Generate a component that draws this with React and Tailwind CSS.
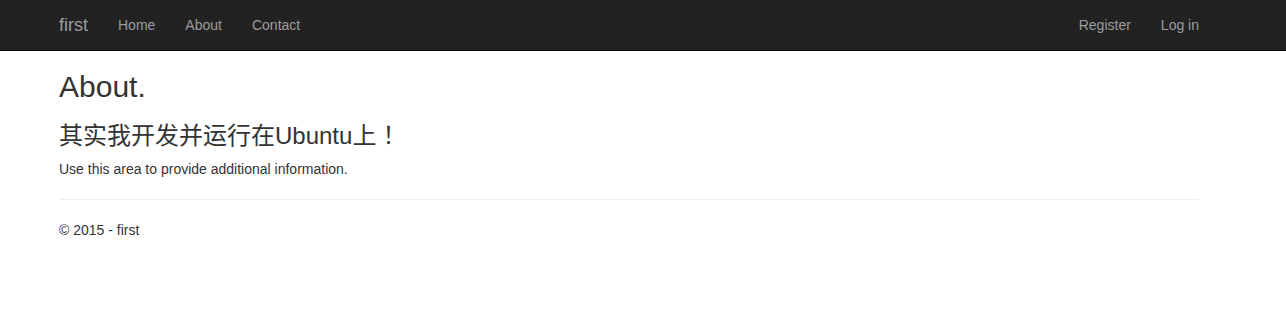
import React from 'react';

const font = { fontFamily: '"Liberation Sans", "Noto Sans CJK SC", Arial, sans-serif' };

const NavLink = ({ children }) => (
  <a href="#" className="block px-[15px] py-[15px] text-[14px] leading-[20px] text-[#9d9d9d]">
    {children}
  </a>
);

export default function App() {
  return (
    <div className="min-h-[327px] bg-white text-[#333] text-[14px] leading-[20px]" style={font}>
      {/* Navbar */}
      <div className="h-[51px] bg-[#222] border-b border-[#080808]">
        <div className="ml-[59px] w-[1140px] flex items-center justify-between">
          <div className="flex items-center">
            <a href="#" className="block -ml-[15px] px-[15px] py-[15px] text-[18px] leading-[20px] text-[#9d9d9d]">
              first
            </a>
            <NavLink>Home</NavLink>
            <NavLink>About</NavLink>
            <NavLink>Contact</NavLink>
          </div>
          <div className="flex items-center -mr-[15px]">
            <NavLink>Register</NavLink>
            <NavLink>Log in</NavLink>
          </div>
        </div>
      </div>

      {/* Body */}
      <div className="ml-[59px] w-[1140px]">
        <h2 className="mt-[19px] mb-[10px] text-[30px] leading-[33px] font-normal">About.</h2>
        <h3 className="mt-[20px] mb-[10px] text-[24px] leading-[26.4px] font-normal">
          其实我开发并运行在Ubuntu上<span className="inline-block w-[24px] pl-[6px] text-left">！</span>
        </h3>
        <p className="mb-[10px]">Use this area to provide additional information.</p>
        <hr className="mt-[20px] mb-[20px] border-0 border-t border-[#eee]" />
        <footer>
          <p className="mb-[10px]">© 2015 - first</p>
        </footer>
      </div>
    </div>
  );
}
